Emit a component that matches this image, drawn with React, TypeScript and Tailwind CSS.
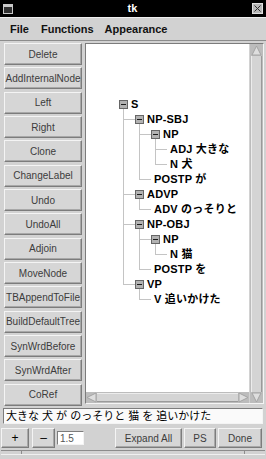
import React from "react";

interface TNode {
  label: string;
  children?: TNode[];
}

type TCell = "pass" | "blank" | "tee" | "end";

interface TRow {
  label: string;
  cells: TCell[];
  hasChildren: boolean;
}

const tree: TNode = {
  label: "S",
  children: [
    {
      label: "NP-SBJ",
      children: [
        { label: "NP", children: [{ label: "ADJ 大きな" }, { label: "N 犬" }] },
        { label: "POSTP が" },
      ],
    },
    { label: "ADVP", children: [{ label: "ADV のっそりと" }] },
    {
      label: "NP-OBJ",
      children: [
        { label: "NP", children: [{ label: "N 猫" }] },
        { label: "POSTP を" },
      ],
    },
    { label: "VP", children: [{ label: "V 追いかけた" }] },
  ],
};

const flatten = (node: TNode, guides: boolean[], isLast: boolean, isRoot: boolean): TRow[] => {
  const cells: TCell[] = guides.map((g) => (g ? "pass" : "blank"));
  if (!isRoot) cells.push(isLast ? "end" : "tee");
  const rows: TRow[] = [{ label: node.label, cells, hasChildren: !!node.children }];
  const next = isRoot ? guides : [...guides, !isLast];
  node.children?.forEach((child, i) => {
    rows.push(...flatten(child, next, i === node.children!.length - 1, false));
  });
  return rows;
};

const rows = flatten(tree, [], true, true);

const buttons = [
  "Delete",
  "AddInternalNode",
  "Left",
  "Right",
  "Clone",
  "ChangeLabel",
  "Undo",
  "UndoAll",
  "Adjoin",
  "MoveNode",
  "TBAppendToFile",
  "BuildDefaultTree",
  "SynWrdBefore",
  "SynWrdAfter",
  "CoRef",
];

const raised =
  "bg-[#d6d6d6] border border-t-[#f4f4f4] border-l-[#f4f4f4] border-r-[#7c7c7c] border-b-[#7c7c7c] shadow-[inset_-1px_-1px_0_#a8a8a8]";
const sunken =
  "border border-t-[#7c7c7c] border-l-[#7c7c7c] border-r-[#f4f4f4] border-b-[#f4f4f4]";

const Cell = ({ type }: { type: TCell }) => (
  <svg width="16" height="15" className="shrink-0" shapeRendering="crispEdges">
    {(type === "pass" || type === "tee") && <line x1="4.5" y1="0" x2="4.5" y2="15" stroke="#c4c4c4" />}
    {type === "end" && <line x1="4.5" y1="0" x2="4.5" y2="7.5" stroke="#c4c4c4" />}
    {(type === "tee" || type === "end") && <line x1="4.5" y1="7.5" x2="16" y2="7.5" stroke="#c4c4c4" />}
  </svg>
);

const Arrow = ({ dir }: { dir: "up" | "down" | "left" | "right" }) => {
  const pts = {
    up: "1,10 5.5,1 10,10",
    down: "1,1 5.5,10 10,1",
    left: "10,1 1,5.5 10,10",
    right: "1,1 10,5.5 1,10",
  }[dir];
  return (
    <svg width="11" height="11" className="shrink-0">
      <polygon points={pts} fill="#dedede" stroke="#a4a4a4" strokeWidth="1" />
    </svg>
  );
};

const App = () => {
  return (
    <div
      className="w-[266px] h-[459px] bg-[#d2d2d2] flex flex-col overflow-hidden"
      style={{ fontFamily: '"Liberation Sans", "Noto Sans CJK JP", sans-serif' }}
    >
      {/* title bar */}
      <div className="h-[17px] bg-black flex items-center px-[3px] shrink-0">
        <div className="w-[10px] h-[10px] border border-[#c8c8c8] bg-[#303030] flex flex-col">
          <div className="h-[2px] bg-[#c8c8c8]" />
        </div>
        <div className="flex-1 text-center text-white text-[11px] font-bold leading-none">tk</div>
        <div className="w-[11px] h-[11px] bg-[#b8b8b8] border border-[#e0e0e0] flex items-center justify-center">
          <svg width="7" height="7">
            <path d="M0.5 0.5 L6.5 6.5 M6.5 0.5 L0.5 6.5" stroke="#303030" strokeWidth="1" />
          </svg>
        </div>
      </div>

      {/* menu bar */}
      <div className="h-[24px] shrink-0 flex items-center pl-[10px] gap-[12px] text-[11px] font-bold text-[#111] border-t border-t-[#efefef] border-b border-b-[#8c8c8c]">
        <span>File</span>
        <span>Functions</span>
        <span className="ml-[-1px]">Appearance</span>
      </div>

      {/* main area */}
      <div className="flex gap-[3px] pl-[4px] pr-[2px] pt-[2px] h-[365px] shrink-0">
        <div className="w-[78px] flex flex-col justify-between">
          {buttons.map((b) => (
            <div
              key={b}
              className={`h-[22px] flex items-center justify-center overflow-hidden whitespace-nowrap text-[10px] text-[#3c3c3c] ${raised}`}
            >
              {b}
            </div>
          ))}
        </div>

        <div className={`flex-1 flex gap-[1px] h-[361px] ${sunken}`}>
          <div className="flex-1 flex flex-col">
            <div className="flex-1 bg-white pl-[33px] pt-[53px] overflow-hidden">
              {rows.map((r, i) => (
                <div key={i} className="flex h-[15px] items-start">
                  {r.cells.map((c, j) => (
                    <Cell key={j} type={c} />
                  ))}
                  {r.hasChildren && (
                    <div className="w-[9px] h-[15px] flex flex-col items-center shrink-0">
                      <div className="h-[3px]" />
                      <div className="w-[9px] h-[9px] border border-[#666] bg-[#b2b2b2] flex items-center justify-center">
                        <div className="w-[5px] h-px bg-[#1c1c1c]" />
                      </div>
                      <div className="w-px h-[3px] bg-[#c4c4c4]" />
                    </div>
                  )}
                  <span className="ml-[3px] text-[11px] font-bold leading-[15px] text-black whitespace-nowrap tracking-[0.2px]">
                    {r.label}
                  </span>
                </div>
              ))}
            </div>
            <div className="h-[11px] bg-[#bcbcbc] flex items-center">
              <Arrow dir="left" />
              <div className="flex-1 h-[9px] bg-[#d4d4d4] border-t border-t-[#ececec] border-b border-b-[#9a9a9a]" />
              <Arrow dir="right" />
            </div>
          </div>
          <div className="w-[13px] bg-[#bcbcbc] flex flex-col items-center pt-[1px]">
            <Arrow dir="up" />
            <div className="flex-1 w-[11px] bg-[#d4d4d4] border-l border-l-[#ececec] border-r border-r-[#9a9a9a]" />
            <Arrow dir="down" />
          </div>
        </div>
      </div>

      {/* sentence entry */}
      <div className="px-[3px] pt-[2px] shrink-0">
        <div className={`h-[16px] bg-[#fafafa] flex items-center pl-[2px] text-[11px] text-black whitespace-nowrap overflow-hidden ${sunken}`}>
          大きな 犬 が のっそりと 猫 を 追いかけた
        </div>
      </div>

      {/* bottom controls */}
      <div className="flex items-center pl-[1px] pr-[4px] pt-[4px] h-[24px] shrink-0 text-[10px] text-[#3c3c3c]">
        <div className={`w-[28px] h-[20px] flex items-center justify-center text-[12px] text-black ${raised}`}>+</div>
        <div className={`w-[23px] h-[20px] ml-[3px] flex items-center justify-center text-[12px] text-black ${raised}`}>–</div>
        <div className={`w-[27px] h-[14px] ml-[2px] bg-white flex items-center pl-[2px] text-[10px] text-[#555] ${sunken}`}>1.5</div>
        <div className="flex-1" />
        <div className={`w-[67px] h-[20px] flex items-center justify-center ${raised}`}>Expand All</div>
        <div className={`w-[32px] h-[20px] ml-[2px] flex items-center justify-center ${raised}`}>PS</div>
        <div className={`w-[44px] h-[20px] ml-[2px] flex items-center justify-center ${raised}`}>Done</div>
      </div>

      {/* status strip */}
      <div className="mt-[2px] mx-[1px] h-[5px] flex shrink-0 border-t border-t-[#8c8c8c] border-b border-b-[#f0f0f0]">
        <div className="w-[21px] border-r border-r-[#8c8c8c]" />
        <div className="flex-1 border-r border-r-[#8c8c8c]" />
        <div className="w-[20px]" />
      </div>
    </div>
  );
};

export default App;
